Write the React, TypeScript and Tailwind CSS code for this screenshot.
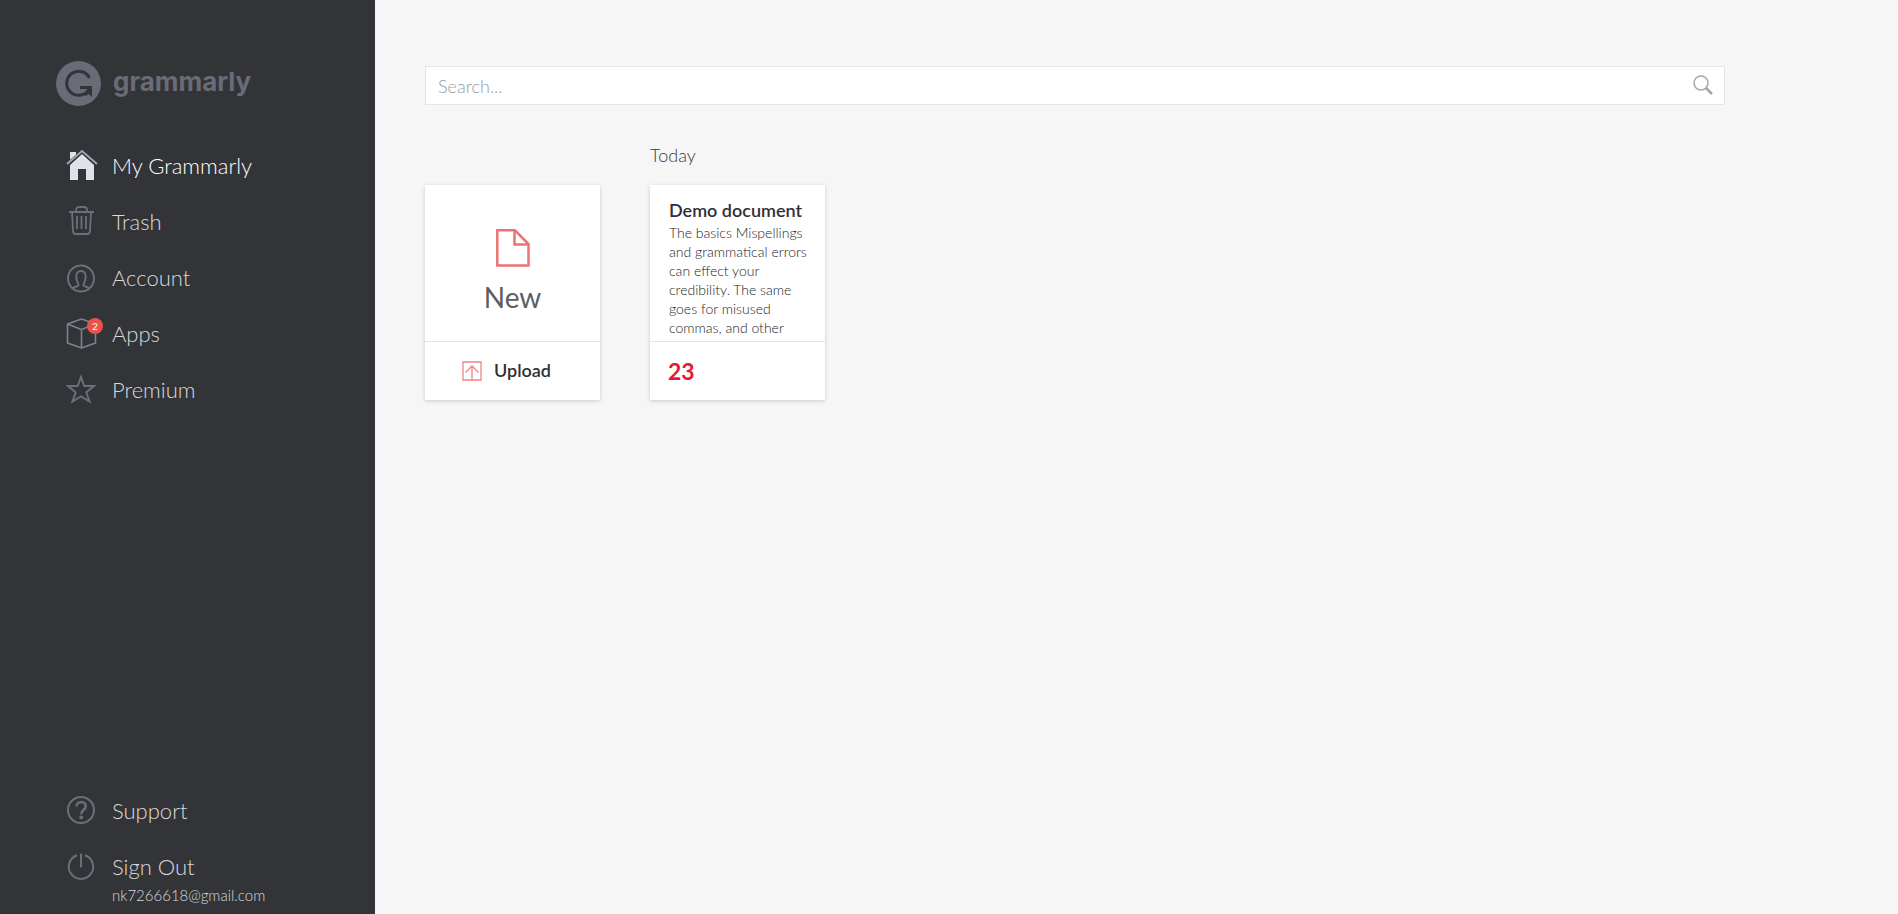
import React, { useState } from 'react';

const IconHome = () => (
  <svg width="32" height="32" viewBox="0 0 32 32" fill="none" className="shrink-0">
    <path d="M4 3h6v5l-6 5z" fill="#dfe2e8" />
    <path d="M16 5L28 16v15h-8V20h-8v11H4V16z" fill="#dfe2e8" />
    <path d="M1 15.500L16 2.500l15 13" stroke="#333438" strokeWidth="3" />
    <path d="M1 15L16 2l15 13" stroke="#a3a3b2" strokeWidth="2" />
  </svg>
);

const IconTrash = () => (
  <svg width="32" height="32" viewBox="0 0 32 32" fill="none" stroke="#6d6e79" strokeWidth="1.8" className="shrink-0">
    <path d="M3 7h25M10 7V5a3 3 0 0 1 3-3h5a3 3 0 0 1 3 3v2" />
    <path d="M6 7l1 19a3 3 0 0 0 3 3h11a3 3 0 0 0 3-3l1-19" />
    <path d="M11 11v13M15.500 11v13M20 11v13" />
  </svg>
);

const IconAccount = () => (
  <svg width="32" height="32" viewBox="0 0 32 32" fill="none" stroke="#6d6e79" strokeWidth="2" className="shrink-0">
    <circle cx="15" cy="17.500" r="13" />
    <path d="M7 27.500c1-2 5-1.500 5.500-3.500c.3-1.500-2-3-2.200-8C10.300 12 12 10 15 10s4.700 2 4.700 6c-.2 5-2.500 6.500-2.200 8C18 26 22 25.500 23 27.500" />
  </svg>
);

const IconApps = () => (
  <svg width="32" height="32" viewBox="0 0 32 32" fill="none" stroke="#7f7f8f" strokeWidth="1.6" strokeLinejoin="round" className="shrink-0">
    <path d="M15.500 2L29.500 7v19L15.500 31 1.500 26V7zM1.500 7l14 5.500L29.500 7M15.500 12.500V31" />
  </svg>
);

const IconStar = () => (
  <svg width="32" height="32" viewBox="0 0 32 32" fill="none" stroke="#6d6e79" strokeWidth="2" className="shrink-0">
    <path d="M15 4l3.300 9H28l-7.700 6.300L23.500 28.500 15 23.300l-8.500 5.200 3.200-9.200L2 13h9.700z" />
  </svg>
);

const IconSupport = () => (
  <svg width="32" height="32" viewBox="0 0 32 32" fill="none" stroke="#6d6e79" strokeWidth="2" className="shrink-0">
    <circle cx="15" cy="16" r="13" />
    <path d="M10.500 12.500c0-2.500 2-4.500 4.700-4.500s4.600 1.700 4.600 4.200c0 3.600-4.600 3.600-4.600 8" strokeWidth="2.600" />
    <circle cx="15.200" cy="23.500" r="1" />
  </svg>
);

const IconPower = () => (
  <svg width="32" height="32" viewBox="0 0 32 32" fill="none" stroke="#6d6e79" strokeWidth="2" className="shrink-0">
    <path d="M11 5.200a12.200 12.200 0 1 0 8 0M15 3.500v14" />
  </svg>
);

const Logo = () => (
  <a href="#" className="flex items-start gap-3 text-[#696b77]">
    <svg width="45" height="45" viewBox="0 0 45 45" fill="none" className="shrink-0">
      <circle cx="22.500" cy="22.500" r="22.500" fill="#696b77" />
      <path d="M33.500 17A12 12 0 1 0 31 31" stroke="#333438" strokeWidth="3" />
      <path d="M24 25h12v11l-3.500-3-2.500 2-2-2.500 3.500-4.500H24z" fill="#333438" />
    </svg>
    <span className="pt-[5px] text-[26px] leading-8 font-bold font-['Inter',sans-serif]">grammarly</span>
  </a>
);

const topItems = [
  { label: 'My Grammarly', icon: IconHome, active: true },
  { label: 'Trash', icon: IconTrash },
  { label: 'Account', icon: IconAccount },
  { label: 'Apps', icon: IconApps, badge: 2 },
  { label: 'Premium', icon: IconStar },
];

const Sidebar = () => (
  <aside className="w-[375px] shrink-0 bg-[#333438] flex flex-col justify-between">
    <div>
      <div className="pl-14 pt-[61px]"><Logo /></div>
      <nav className="pt-[31px] pl-[66px]">
        {topItems.map(({ label, icon: Icon, active, badge }) => (
          <a key={label} href="#" className={`flex items-center gap-[14px] h-14 text-[22px] font-light ${active ? 'text-white' : 'text-[#d8d9dd]'}`}>
            <span className="relative">
              <Icon />
              {badge && <span className="absolute top-px left-[21px] size-4 rounded-full bg-[#e8534a] text-white text-[10px] leading-4 font-normal text-center">{badge}</span>}
            </span>
            {label}
          </a>
        ))}
      </nav>
    </div>
    <nav className="pl-[66px] pb-2.5 font-light text-[#d8d9dd]">
      <a href="#" className="flex items-center gap-[14px] h-14 text-[22px]"><IconSupport />Support</a>
      <button className="flex items-center gap-[14px] h-14 text-[22px]"><IconPower />Sign Out</button>
      <div className="pl-[46px] text-[15px] leading-[18px] -mt-2">nk7266618@gmail.com</div>
    </nav>
  </aside>
);

const NewCard = () => (
  <div className="w-[175px] h-[215px] bg-white shadow-[0_1px_4px_rgba(0,0,0,0.18)] flex flex-col">
    <button className="flex-1 flex flex-col items-center justify-center gap-3 pt-[18px] text-[28px] leading-9 text-[#5b5d63]">
      <svg width="34" height="38" viewBox="0 0 34 38" fill="none" stroke="#ea7472" strokeWidth="2.500">
        <path d="M1.300 1.300H19L32.500 15v21.500H1.300z" />
        <path d="M18.500 1.300V15.500h14" />
      </svg>
      New
    </button>
    <button className="h-[59px] border-t border-[#e3e3e3] flex items-center justify-center gap-3 pr-3 pb-px text-[18px] font-semibold text-[#2f3034]">
      <svg width="20" height="20" viewBox="0 0 20 20" fill="none" stroke="#f08583" strokeWidth="1.300">
        <path d="M1 1h18v18H1zM10 19V5M3.500 11.500L10 5l6.500 6.500" />
      </svg>
      Upload
    </button>
  </div>
);

const DocumentCard = () => (
  <a href="#" className="w-[175px] h-[215px] bg-white shadow-[0_1px_4px_rgba(0,0,0,0.18)] flex flex-col">
    <div className="h-[156px] overflow-hidden pt-3 pl-[19px] pr-4">
      <h3 className="text-[18px] leading-[26px] font-semibold text-[#2f3034] whitespace-nowrap">Demo document</h3>
      <p className="text-[14px] leading-[19px] font-light text-[#222327]">
        The basics Mispellings and grammatical errors can effect your credibility. The same goes for misused commas, and other
      </p>
    </div>
    <div className="h-[59px] border-t border-[#e3e3e3] flex items-center pl-[18px] text-[23px] font-bold text-[#ea1537]">23</div>
  </a>
);

export default function App() {
  const [query, setQuery] = useState('');

  return (
    <div className="flex min-h-screen bg-[#f6f6f6] font-['Lato',sans-serif]">
      <Sidebar />
      <main className="flex-1 pl-[50px] pr-[50px] pt-[66px]">
        <label className="flex items-center max-w-[1300px] h-[39px] bg-white border border-[#e6e6e6] pl-3 pr-[11px]">
          <input
            className="flex-1 pt-0.5 text-[18px] font-light text-[#3a3b40] placeholder-[#979ca3] outline-none"
            type="text"
            aria-label="Search"
            placeholder="Search..."
            value={query}
            onChange={e => setQuery(e.target.value)}
          />
          <svg width="20" height="22" viewBox="0 0 20 22" fill="none" stroke="#a5a8ab" className="shrink-0">
            <circle cx="8" cy="8" r="7" strokeWidth="1.500" />
            <path d="M13 13l6 6" strokeWidth="2.500" />
          </svg>
        </label>
        <div className="flex items-end gap-[50px] pt-9">
          <NewCard />
          <section>
            <h2 className="text-[18px] leading-7 font-light text-[#3a3b40] pb-4">Today</h2>
            <DocumentCard />
          </section>
        </div>
      </main>
    </div>
  );
}
